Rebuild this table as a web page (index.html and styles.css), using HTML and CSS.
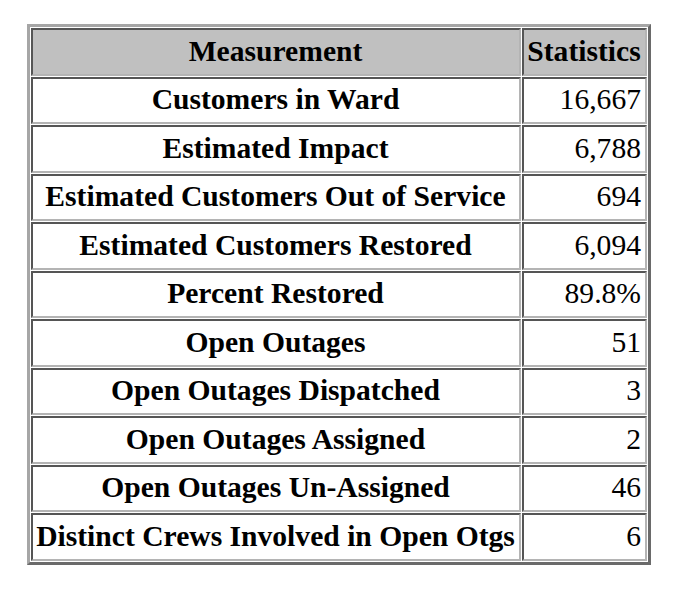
FILE: index.html
```html
<!DOCTYPE html>
<html>
<head>
<meta charset="utf-8">
<link rel="stylesheet" href="styles.css">
</head>
<body>
<table class="stats">
  <tr class="head"><th class="label">Measurement</th><th class="value">Statistics</th></tr>
  <tr><th class="label">Customers in Ward</th><td class="value">16,667</td></tr>
  <tr><th class="label">Estimated Impact</th><td class="value">6,788</td></tr>
  <tr><th class="label">Estimated Customers Out of Service</th><td class="value">694</td></tr>
  <tr><th class="label">Estimated Customers Restored</th><td class="value">6,094</td></tr>
  <tr><th class="label">Percent Restored</th><td class="value">89.8%</td></tr>
  <tr><th class="label">Open Outages</th><td class="value">51</td></tr>
  <tr><th class="label">Open Outages Dispatched</th><td class="value">3</td></tr>
  <tr><th class="label">Open Outages Assigned</th><td class="value">2</td></tr>
  <tr><th class="label">Open Outages Un-Assigned</th><td class="value">46</td></tr>
  <tr><th class="label">Distinct Crews Involved in Open Otgs</th><td class="value">6</td></tr>
</table>
</body>
</html>
```
FILE: styles.css
```css
html, body {
  margin: 0;
  padding: 0;
  background: #ffffff;
}
body {
  padding: 24px 0 0 27px;
  font-family: "Liberation Serif", "Times New Roman", "DejaVu Serif", serif;
  color: #000;
}
.stats {
  border-collapse: separate;
  border-spacing: 1px;
  border-style: solid;
  border-width: 3px;
  border-color: #a6a6a6 #6a6a6a #6a6a6a #a6a6a6;
}
.stats th, .stats td {
  font-family: "Liberation Serif", "Times New Roman", "DejaVu Serif", serif;
  font-size: 29.6px;
  border-style: solid;
  border-width: 2px;
  border-color: #555555 #b4b4b4 #b4b4b4 #555555;
  padding: 5.5px 4px 6.5px 3px;
  line-height: 31.5px;
  white-space: nowrap;
}
.stats th {
  font-weight: bold;
  text-align: center;
}
.stats td.value {
  text-align: right;
  font-weight: normal;
}
.stats .head th {
  background: #c0c0c0;
}
.stats th.label {
  width: 479px;
}
.stats .value {
  width: 114px;
}
```
